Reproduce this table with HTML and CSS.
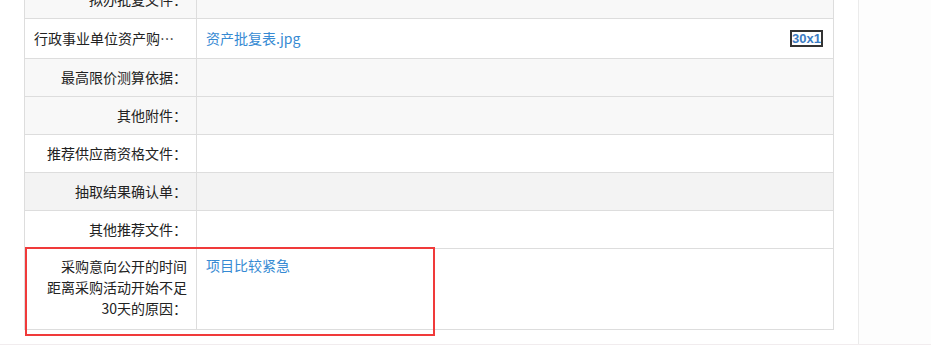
FILE: index.html
```html
<!DOCTYPE html>
<html lang="zh-CN">
<head>
  <meta charset="UTF-8" />
  <meta name="viewport" content="width=device-width, initial-scale=1.0"/>
  <title>采购附件</title>
  <link rel="stylesheet" href="styles.css">
</head>
<body>
  <div class="page">
    <div class="main">
      <table class="files">
        <colgroup>
          <col class="col-label">
          <col>
        </colgroup>
        <tr class="grey">
          <th>拟办批复文件：</th>
          <td></td>
        </tr>
        <tr class="tall">
          <th class="clip">行政事业单位资产购置批复文件：</th>
          <td>
            <span class="thumb">30x1</span>
            <a href="#">资产批复表.jpg</a>
          </td>
        </tr>
        <tr class="grey">
          <th>最高限价测算依据：</th>
          <td></td>
        </tr>
        <tr class="grey">
          <th>其他附件：</th>
          <td></td>
        </tr>
        <tr>
          <th>推荐供应商资格文件：</th>
          <td></td>
        </tr>
        <tr class="hover">
          <th>抽取结果确认单：</th>
          <td></td>
        </tr>
        <tr>
          <th>其他推荐文件：</th>
          <td></td>
        </tr>
        <tr class="top">
          <th class="marked">采购意向公开的时间<br>距离采购活动开始不足<br>30天的原因：<span class="mark"></span></th>
          <td><a href="#">项目比较紧急</a></td>
        </tr>
      </table>
    </div>
    <div class="side"></div>
  </div>
</body>
</html>
```

FILE: styles.css
```css
body {
  margin: 0;
  font-family: "Noto Sans CJK SC", "Liberation Sans", sans-serif;
  font-size: 14px;
  color: #222;
  background: #fff;
  overflow: hidden;
}
.page {
  display: flex;
  border-bottom: 1px solid #f1ecee;
}
.main {
  width: 859px;
  padding: 0 25px 14px 24px;
  box-sizing: border-box;
  border-right: 1px solid #ebebeb;
  margin-top: -20px;
}
.side {
  flex: 1;
  background: #fdfdfd;
}
.files {
  width: 810px;
  border-collapse: collapse;
  table-layout: fixed;
  border: 1px solid #ddd;
}
.col-label {
  width: 172px;
}
.files th,
.files td {
  border: 1px solid #ddd;
  padding: 8px 9px;
  line-height: 21px;
  font-weight: normal;
}
.files th {
  text-align: right;
}
.files .clip {
  white-space: nowrap;
  overflow: hidden;
  text-overflow: ellipsis;
  text-align: left;
}
.files tr.tall th,
.files tr.tall td {
  padding-top: 9px;
  padding-bottom: 9px;
}
.files tr.top th {
  padding-top: 7px;
  padding-bottom: 10px;
}
.files tr.top td {
  vertical-align: top;
  padding-top: 6px;
}
.grey {
  background: #f8f8f8;
}
.hover {
  background: #f3f3f3;
}
.files a {
  color: #368ad3;
  text-decoration: none;
}
.thumb {
  float: right;
  margin-top: 2px;
  margin-right: 1px;
  border: 2px solid #333;
  font-family: "Liberation Sans", sans-serif;
  font-weight: bold;
  font-size: 13px;
  line-height: 13px;
  color: #3b7cc4;
}
/* red highlight around the late-notice reason */
.marked {
  position: relative;
}
.mark {
  position: absolute;
  left: 0;
  top: -2px;
  width: 406px;
  height: 85px;
  border: 2px solid #f03a3a;
}
```
